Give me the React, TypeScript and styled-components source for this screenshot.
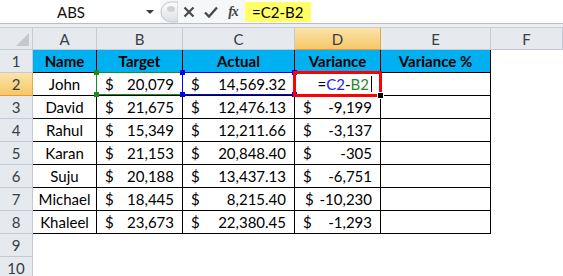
import { Fragment } from "react"
import styled, { createGlobalStyle } from "styled-components"

const GlobalStyle = createGlobalStyle`
  body {
    margin: 0;
    background: #ffffff;
    font-family: Lato, "Liberation Sans", sans-serif;
    overflow: hidden;
  }
`

const Window = styled.div`
  width: 563px;
  height: 276px;
  overflow: hidden;
  background: #ffffff;
`

const FormulaBar = styled.div`
  display: flex;
  align-items: center;
  height: 23px;
  border-bottom: 1px solid #b9bec6;
  background: #ffffff;
`

const NameBox = styled.div`
  width: 142px;
  text-align: center;
  font-size: 15px;
  color: #111;
`

const DropArrow = styled.div`
  width: 0;
  height: 0;
  margin: 0 6px 0 4px;
  border-left: 4px solid transparent;
  border-right: 4px solid transparent;
  border-top: 4px solid #3c3c3c;
`

const Tools = styled.div`
  display: flex;
  align-items: center;
  height: 23px;
  width: 85px;
  background: #f6f7f8;
`

const ToolIcon = styled.div`
  width: 22px;
  display: flex;
  justify-content: center;
  align-items: center;
`

const Fx = styled.span`
  font-family: "Liberation Serif", serif;
  font-style: italic;
  font-weight: bold;
  font-size: 14px;
  color: #444;
  letter-spacing: -1px;
`

const FormulaInput = styled.div`
  flex: 1;
  display: flex;
  align-items: center;
  height: 23px;
`

const Highlight = styled.span`
  background: #ffff66;
  height: 20px;
  line-height: 20px;
  padding: 0 8px 0 7px;
  font-size: 15px;
  color: #000;
`

const Gap = styled.div`
  height: 3px;
  background: #eceef1;
  border-bottom: 1px solid #c9ced6;
`

const Sheet = styled.div`
  display: grid;
  grid-template-columns: 33px 64px 86px 112px 86px 110px 72px;
  grid-template-rows: 22px;
  grid-auto-rows: 23px;
  font-size: 15px;
`

const Corner = styled.div`
  background: #e6e9ee;
  border-right: 1px solid #c3cad4;
  border-bottom: 1px solid #c3cad4;
  box-sizing: border-box;
  position: relative;
  &::after {
    content: "";
    position: absolute;
    right: 3px;
    bottom: 3px;
    border-left: 13px solid transparent;
    border-bottom: 13px solid #c4c9d0;
  }
`

const Head = styled.div<{ $active?: boolean }>`
  box-sizing: border-box;
  display: flex;
  align-items: center;
  justify-content: center;
  color: #383d45;
  background: ${(p) =>
    p.$active ? "linear-gradient(#fbe3a8, #f5c869)" : "#e6e9ee"};
  border-right: 1px solid ${(p) => (p.$active ? "#e2a94a" : "#c3cad4")};
  border-bottom: 1px solid ${(p) => (p.$active ? "#f29436" : "#c3cad4")};
`

const Cell = styled.div<{ $align?: string; $head?: boolean; $bordered?: boolean }>`
  box-sizing: border-box;
  position: relative;
  display: flex;
  align-items: center;
  justify-content: ${(p) => p.$align || "center"};
  padding: 0 8px;
  color: #000;
  white-space: nowrap;
  font-weight: ${(p) => (p.$head ? 700 : 400)};
  background: ${(p) => (p.$head ? "#00b0f0" : "#ffffff")};
  border-right: ${(p) => (p.$bordered ? "1px solid #000" : "none")};
  border-bottom: ${(p) => (p.$bordered ? "1px solid #000" : "none")};
`

const Money = styled.span`
  display: flex;
  justify-content: space-between;
  width: 100%;
`

const Selection = styled.div<{ $color: string }>`
  position: absolute;
  z-index: 2;
  top: -1px;
  left: -1px;
  right: -1px;
  bottom: 0;
  border: 1px solid ${(p) => p.$color};
  pointer-events: none;
`

const Handle = styled.div<{ $color: string; $x: string; $y: string }>`
  position: absolute;
  width: 5px;
  height: 5px;
  background: ${(p) => p.$color};
  ${(p) => p.$x}: -3px;
  ${(p) => p.$y}: -3px;
`

const ActiveBox = styled.div`
  position: absolute;
  z-index: 3;
  top: -2px;
  left: -2px;
  right: -2px;
  bottom: -2px;
  border: 3px solid #ff0000;
  pointer-events: none;
`

const FillHandle = styled.div`
  position: absolute;
  width: 5px;
  height: 5px;
  background: #000;
  right: -5px;
  bottom: -5px;
  border: 1px solid #fff;
`

const Ref = styled.span<{ $color: string }>`
  color: ${(p) => p.$color};
`

const Caret = styled.span`
  display: inline-block;
  width: 1px;
  height: 16px;
  margin-left: 2px;
  background: #000;
  vertical-align: middle;
`

const rows = [
  ["John", "20,079", "14,569.32", ""],
  ["David", "21,675", "12,476.13", "-9,199"],
  ["Rahul", "15,349", "12,211.66", "-3,137"],
  ["Karan", "21,153", "20,848.40", "-305"],
  ["Suju", "20,188", "13,437.13", "-6,751"],
  ["Michael", "18,445", "8,215.40", "-10,230"],
  ["Khaleel", "23,673", "22,380.45", "-1,293"],
]

const Corners = ({ color }: { color: string }) => (
  <Selection $color={color}>
    <Handle $color={color} $x="left" $y="top" />
    <Handle $color={color} $x="right" $y="top" />
    <Handle $color={color} $x="left" $y="bottom" />
    <Handle $color={color} $x="right" $y="bottom" />
  </Selection>
)

const Dollar = ({ v, tight }: { v: string; tight?: boolean }) => (
  <Money>
    <span style={tight ? { marginLeft: 2 } : undefined}>$</span>
    <span>{v}</span>
  </Money>
)

export default function App() {
  return (
    <Window>
      <GlobalStyle />
      <FormulaBar>
        <NameBox>ABS</NameBox>
        <DropArrow />
        <Tools>
          <svg width="18" height="22" viewBox="0 0 18 22">
            <defs>
              <linearGradient id="grip" x1="0" y1="0" x2="0" y2="1">
                <stop offset="0" stopColor="#fdfdfd" />
                <stop offset="1" stopColor="#dcdfe3" />
              </linearGradient>
            </defs>
            <path d="M18 1 H11 A10 10 0 0 0 11 21 H18 Z" fill="url(#grip)" stroke="#c2c6cc" />
            <ellipse cx="11" cy="8" rx="4" ry="3" fill="#cfd3d8" />
          </svg>
          <ToolIcon>
            <svg width="12" height="12" viewBox="0 0 12 12">
              <path d="M1.5 1.5 L10.5 10.5 M10.5 1.5 L1.5 10.5" stroke="#4a4a4a" strokeWidth="2.2" />
            </svg>
          </ToolIcon>
          <ToolIcon>
            <svg width="14" height="12" viewBox="0 0 14 12">
              <path d="M1 6.5 L5 10.5 L13 1.5" stroke="#4a4a4a" strokeWidth="2.4" fill="none" />
            </svg>
          </ToolIcon>
          <ToolIcon>
            <Fx>fx</Fx>
          </ToolIcon>
        </Tools>
        <FormulaInput>
          <Highlight>=C2-B2</Highlight>
        </FormulaInput>
      </FormulaBar>
      <Gap />
      <Sheet>
        <Corner />
        {["A", "B", "C", "D", "E", "F"].map((c) => (
          <Head key={c} $active={c === "D"}>
            {c}
          </Head>
        ))}

        <Head>1</Head>
        {["Name", "Target", "Actual", "Variance", "Variance %"].map((h) => (
          <Cell key={h} $head $bordered>
            {h}
          </Cell>
        ))}
        <Cell />

        {rows.map((r, i) => (
          <Fragment key={"row" + i}>
            <Head $active={i === 0}>{i + 2}</Head>
            <Cell $bordered>{r[0]}</Cell>
            <Cell $bordered>
              <Dollar v={r[1]} />
              {i === 0 && <Corners color="#1f8a1f" />}
            </Cell>
            <Cell $bordered>
              <Dollar v={r[2]} />
              {i === 0 && <Corners color="#0000ff" />}
            </Cell>
            <Cell $bordered $align={i === 0 ? "flex-end" : "center"}>
              {i === 0 ? (
                <>
                  <span>
                    =<Ref $color="#2020ff">C2</Ref>-<Ref $color="#1f8a1f">B2</Ref>
                  </span>
                  <Caret />
                  <ActiveBox>
                    <FillHandle />
                  </ActiveBox>
                </>
              ) : (
                <Dollar v={r[3]} tight={r[3] === "-10,230"} />
              )}
            </Cell>
            <Cell $bordered />
            <Cell />
          </Fragment>
        ))}

        {[9, 10].map((n) => (
          <Fragment key={"r" + n}>
            <Head>{n}</Head>
            <Cell />
            <Cell />
            <Cell />
            <Cell />
            <Cell />
            <Cell />
          </Fragment>
        ))}
      </Sheet>
    </Window>
  )
}
